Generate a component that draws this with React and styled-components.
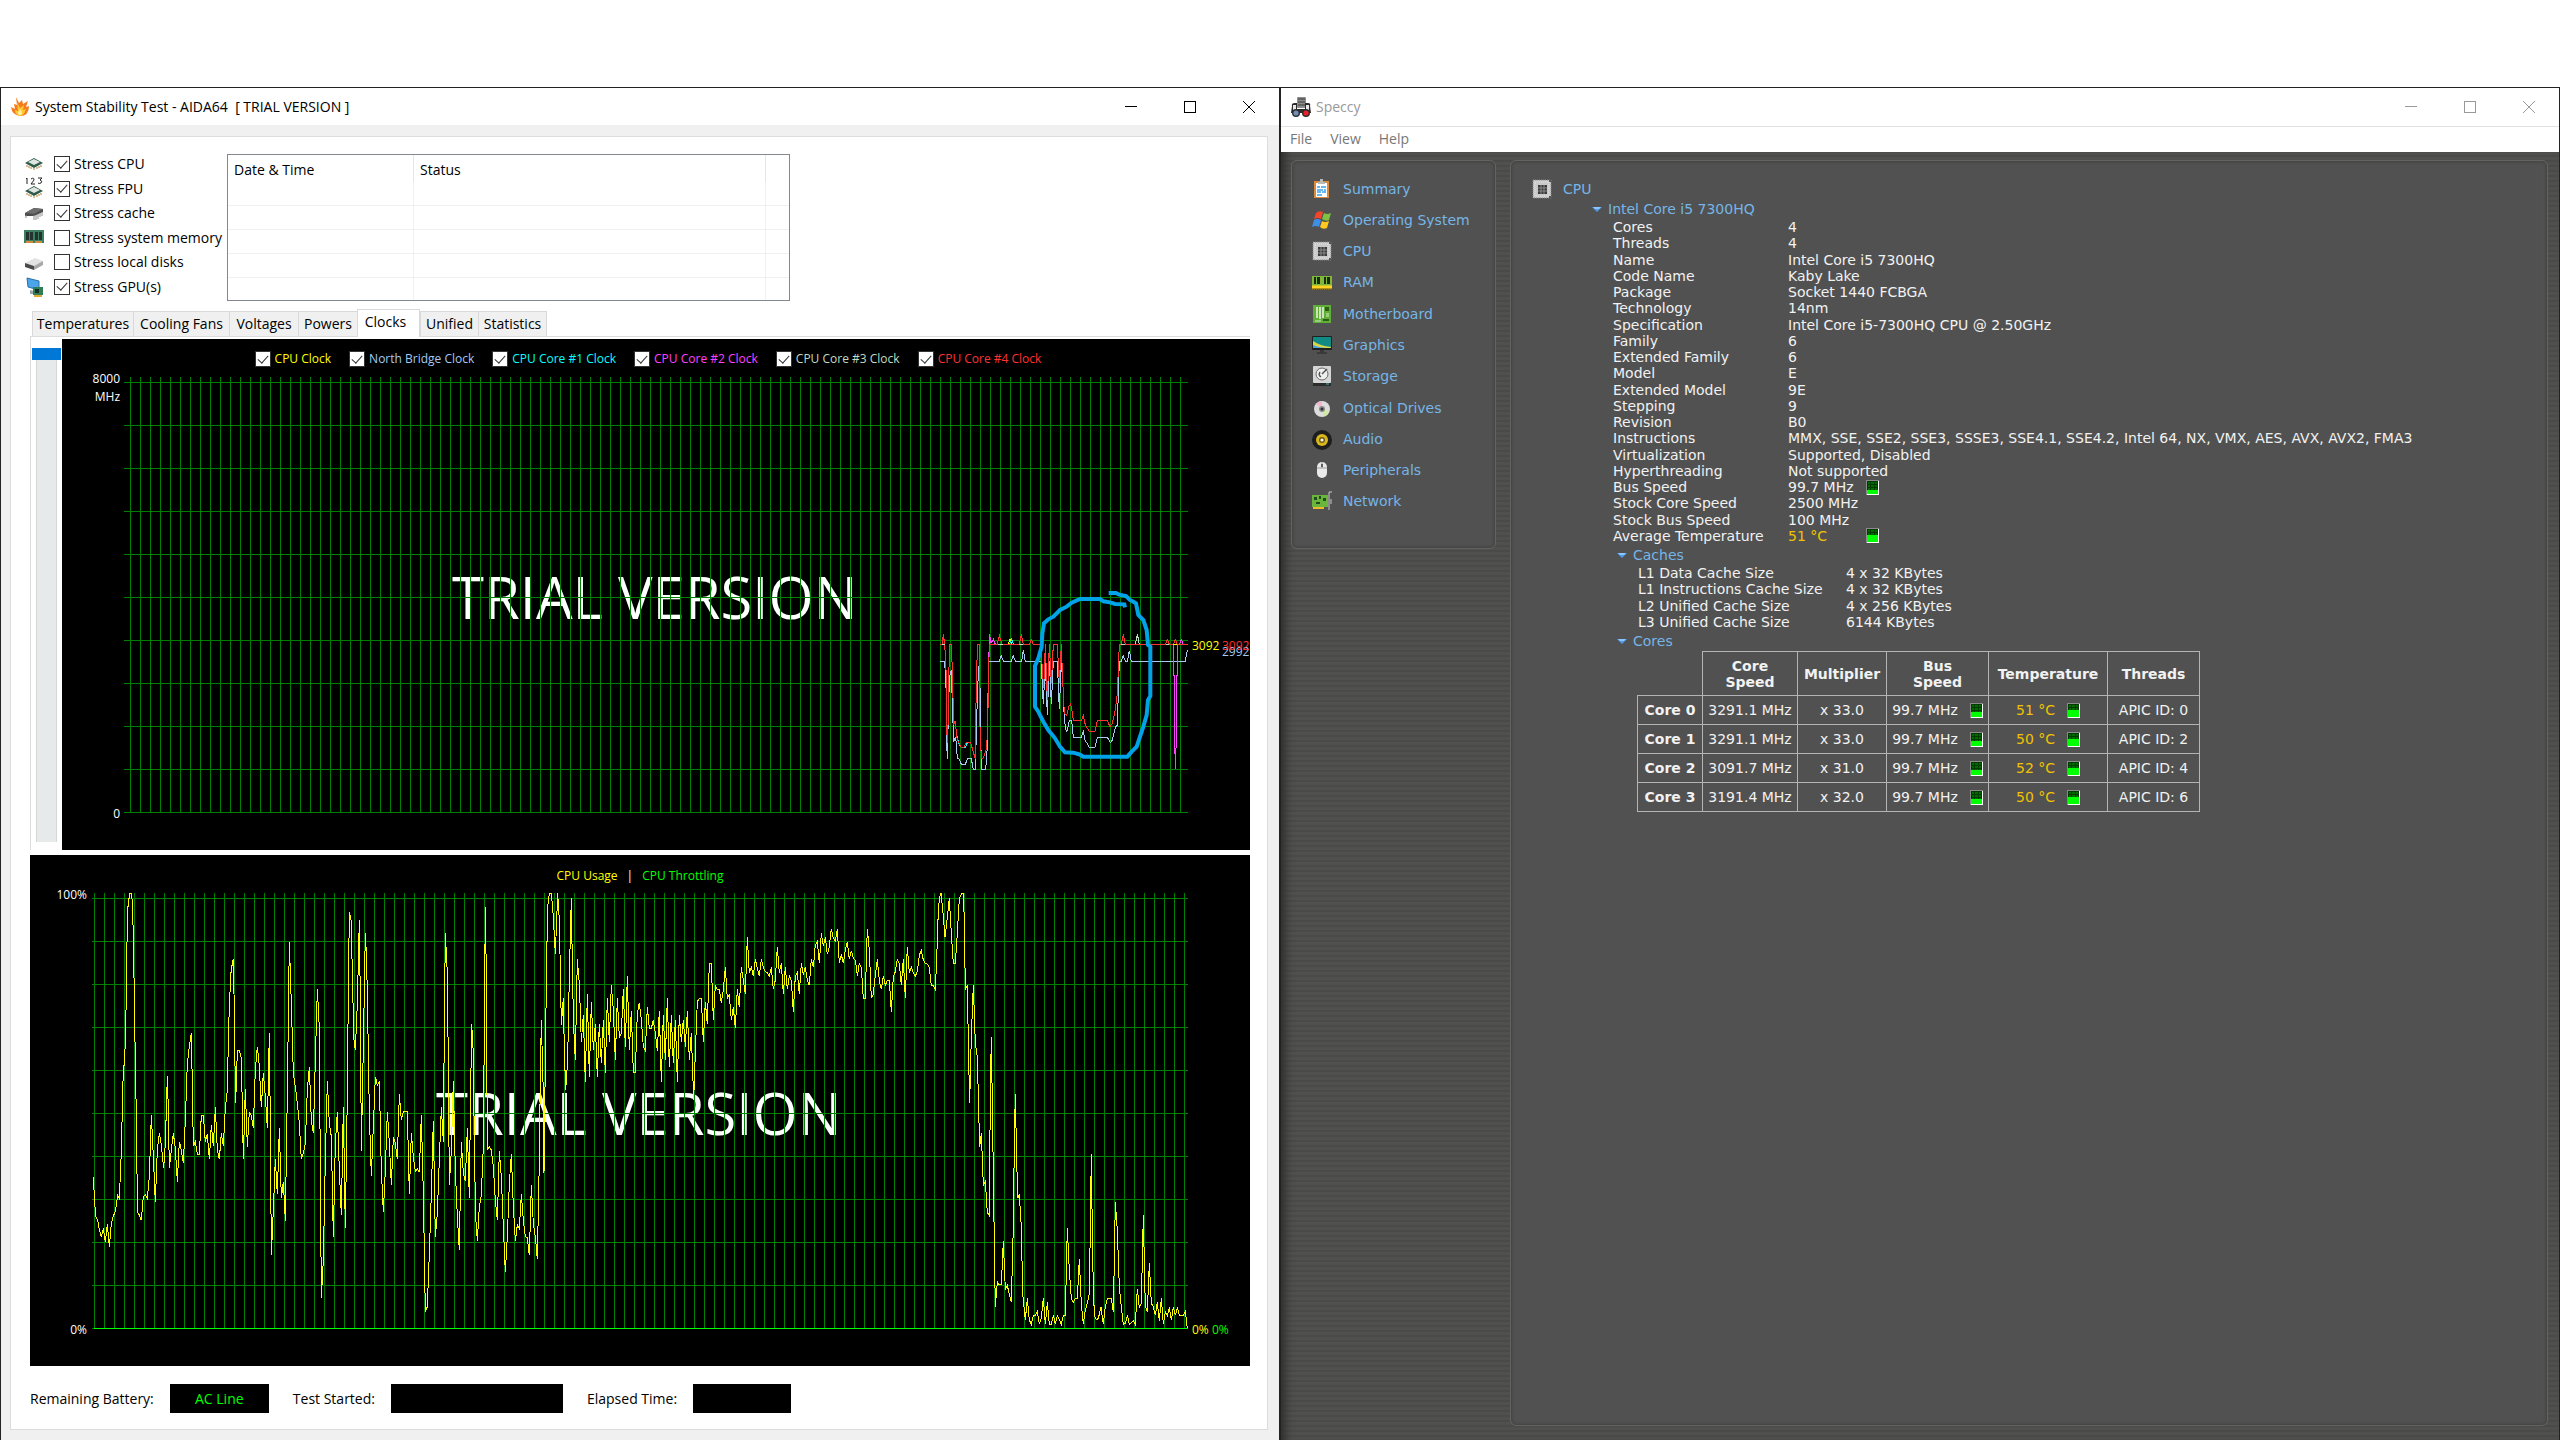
import React from 'react';
import styled, { createGlobalStyle } from 'styled-components';

const GlobalStyle = createGlobalStyle`
  * {
    box-sizing: border-box;
  }

  body {
    margin: 0;
    background: #ffffff;
  }
`;

const Desktop = styled.main`
  display: grid;
  grid-template-columns: 1fr 1fr;
  min-height: 100vh;
  padding-top: 87px;
  font-family: 'Open Sans', 'Noto Sans', sans-serif;
  font-size: 14px;
  line-height: 20px;
  color: #000000;
`;

/* ---------- window chrome ---------- */

const AppWindow = styled.section`
  display: flex;
  flex-direction: column;
  min-width: 0;
  border: 1px solid #222222;
  border-bottom: 0;
  background: ${(props) => props.$background};
`;

const TitleBar = styled.header`
  display: flex;
  align-items: center;
  height: ${(props) => (props.$inactive ? '39px' : '37px')};
  padding: 0 1px 0 10px;
  background: #ffffff;
  color: ${(props) => (props.$inactive ? '#999999' : '#000000')};
  border-bottom: ${(props) => (props.$inactive ? '1px solid #e0e0e0' : '0')};
`;

const WindowTitle = styled.h1`
  flex: 1;
  margin: 0 0 0 5px;
  font-size: 14px;
  font-weight: 400;
  white-space: pre;
`;

const WindowButton = styled.button`
  display: flex;
  align-items: center;
  justify-content: center;
  width: 59px;
  height: 36px;
  padding: 0;
  border: 0;
  background: none;
  color: inherit;
`;

const WindowButtons = () => (
  <>
    <WindowButton aria-label="Minimize">
      <svg width="12" height="12" shapeRendering="crispEdges">
        <rect y="5" width="12" height="1" fill="currentColor" />
      </svg>
    </WindowButton>
    <WindowButton aria-label="Maximize">
      <svg width="12" height="12" shapeRendering="crispEdges">
        <rect x="0.5" y="0.5" width="11" height="11" fill="none" stroke="currentColor" />
      </svg>
    </WindowButton>
    <WindowButton aria-label="Close">
      <svg width="12" height="12">
        <path d="M0 0L12 12M12 0L0 12" stroke="currentColor" />
      </svg>
    </WindowButton>
  </>
);

/* ---------- stability test ---------- */

const Panel = styled.div`
  flex: 1;
  margin: 11px 11px 10px 9px;
  padding: 17px 17px 16px 19px;
  border: 1px solid #dcdcdc;
  background: #ffffff;
`;

const Setup = styled.div`
  display: flex;
  gap: 6px;
  height: 147px;
  margin-left: -6px;
`;

const StressList = styled.div`
  display: flex;
  flex-direction: column;
  justify-content: space-between;
  width: 197px;
  padding: 2px 0 6px;
`;

const CheckLabel = styled.label`
  display: flex;
  align-items: center;
  gap: 4px;
  height: 16px;
  white-space: nowrap;
  color: ${(props) => props.$color || '#000000'};
`;

const CheckBox = styled.input`
  appearance: none;
  display: grid;
  place-content: center;
  flex: none;
  width: 16px;
  height: 16px;
  margin: 0;
  border: 1px solid #333333;
  background: #ffffff;

  &:checked::after {
    content: '';
    width: 5px;
    height: 9px;
    margin-bottom: 3px;
    border: solid #333333;
    border-width: 0 1px 1px 0;
    transform: rotate(42deg);
  }
`;

const StressIcon = styled.svg`
  flex: none;
  width: 20px;
  height: 20px;
  margin-right: 6px;
`;

const LogTable = styled.table`
  width: 563px;
  border: 1px solid #828790;
  border-collapse: separate;
  border-spacing: 0;
  table-layout: fixed;
`;

const LogHead = styled.th`
  width: ${(props) => props.$width};
  height: 27px;
  padding: 3px 0 0 6px;
  border-right: ${(props) => (props.$last ? '0' : '1px solid #e5e5e5')};
  font-weight: 400;
  text-align: left;
`;

const LogCell = styled.td`
  height: ${(props) => (props.$last ? '22px' : '24px')};
  padding: 0;
  border-right: ${(props) => (props.$edge ? '0' : '1px solid #f0f0f0')};
  border-bottom: ${(props) => (props.$last ? '0' : '1px solid #f0f0f0')};
`;

const TabList = styled.div`
  display: flex;
  align-items: flex-end;
  height: 27px;
  margin-top: 8px;
  padding-left: 2px;
`;

const Tab = styled.button`
  height: ${(props) => (props.$active ? '28px' : '25px')};
  width: ${(props) => props.$width};
  margin-bottom: ${(props) => (props.$active ? '-1px' : '0')};
  padding: ${(props) => (props.$active ? '0 6px 3px 0' : '0')};
  border: 1px solid #d9d9d9;
  border-bottom: 0;
  border-right-width: ${(props) => (props.$joined ? '0' : '1px')};
  background: ${(props) => (props.$active ? '#ffffff' : '#f0f0f0')};
  font: inherit;
  white-space: nowrap;
  color: #000000;
`;

const TabBody = styled.div`
  display: grid;
  grid-template-columns: 31px 1fr;
  padding-top: 2px;
  border: solid #dcdcdc;
  border-width: 1px 0 0 1px;
`;

/* the slider takes its length from the graph beside it */
const RangeColumn = styled.div`
  contain: size;
  padding: 9px 1px 8px;
`;

const RangeSlider = styled.input`
  appearance: none;
  writing-mode: vertical-lr;
  display: block;
  width: 29px;
  height: 100%;
  margin: 0;
  background:
    linear-gradient(#e7eaea, #e7eaea) center / 19px 100% no-repeat,
    linear-gradient(#d6d6d6, #d6d6d6) center / 21px 100% no-repeat;

  &::-webkit-slider-thumb {
    appearance: none;
    width: 29px;
    height: 12px;
    background: #0078d7;
  }
`;

const Graph = styled.div`
  min-width: 0;
  margin-top: ${(props) => props.$gap || '0'};
  background: #000000;
  font-size: 12px;
  line-height: 16px;
`;

const GraphLegend = styled.div`
  display: flex;
  justify-content: center;
  gap: ${(props) => props.$gap};
  height: ${(props) => props.$height};
  padding: ${(props) => props.$padding};
  white-space: pre;
`;

const LegendText = styled.span`
  color: ${(props) => props.$color};
`;

const Plot = styled.svg`
  display: block;
  width: 100%;
  height: auto;
  overflow: visible;
  font-family: 'Open Sans', 'Noto Sans', sans-serif;
  font-size: 12px;

  polyline,
  path {
    fill: none;
    vector-effect: non-scaling-stroke;
  }
`;

const Watermark = styled.text`
  font-size: 58px;
  fill: #ffffff;
`;

const StatusBar = styled.div`
  display: flex;
  align-items: center;
  gap: 24px;
  margin-top: 18px;
`;

const StatusField = styled.label`
  display: flex;
  align-items: center;
  gap: 16px;
`;

const StatusValue = styled.output`
  width: ${(props) => props.$width};
  height: 29px;
  background: #000000;
  color: #00ff00;
  line-height: 29px;
  text-align: center;
`;

const stressItems = [
  { name: 'Stress CPU', icon: 'chip', checked: true },
  { name: 'Stress FPU', icon: 'fpu', checked: true },
  { name: 'Stress cache', icon: 'cache', checked: true },
  { name: 'Stress system memory', icon: 'memory', checked: false },
  { name: 'Stress local disks', icon: 'disk', checked: false },
  { name: 'Stress GPU(s)', icon: 'gpu', checked: true },
];

const tabs = [
  { name: 'Temperatures', width: '101px', joined: true },
  { name: 'Cooling Fans', width: '96px', joined: true },
  { name: 'Voltages', width: '69px', joined: true },
  { name: 'Powers', width: '59px', joined: true },
  { name: 'Clocks', width: '63px', active: true },
  { name: 'Unified', width: '58px', joined: true },
  { name: 'Statistics', width: '69px' },
];

const clocks = [
  { name: 'CPU Clock', color: '#ffff00' },
  { name: 'North Bridge Clock', color: '#a6caf0' },
  { name: 'CPU Core #1 Clock', color: '#00ffff' },
  { name: 'CPU Core #2 Clock', color: '#ff40ff' },
  { name: 'CPU Core #3 Clock', color: '#c0dcc0' },
  { name: 'CPU Core #4 Clock', color: '#ff3030' },
];

// traces are recorded at three units per chart pixel
const clockTraces = [
  {
    color: '#a6caf0',
    points:
      '180,304 194,304 198,375 199,520 202,596 206,420 209,350 214,330 217,430 221,545 227,530 232,595 238,597 244,613 256,613 262,597 274,597 280,628 286,628 289,520 293,380 298,304 300,380 304,628 317,628 322,560 326,304 358,304 364,287 370,304 394,304 400,287 406,304 425,304 430,270 436,304 484,304 487,380 490,433 496,310 502,466 508,304 514,433 520,304 532,304 538,448 544,304 549,380 553,480 559,514 562,512 568,482 575,482 580,532 604,532 610,514 616,545 620,547 628,562 645,562 652,532 682,532 691,548 697,540 706,502 712,495 718,304 724,304 730,287 736,304 742,304 748,272 754,304 916,304 922,270',
  },
  { color: '#00ffff', points: '229,518 236,550 244,562 256,562 262,548' },
  { color: '#ff40ff', points: '322,500 326,305 329,223 333,250 340,238 346,253' },
  {
    color: '#ff3030',
    points:
      '180,253 186,253 190,223 194,253 198,320 199,470 202,550 205,470 208,253 214,253 217,330 221,495 226,482 230,530 236,548 244,562 252,562 258,548 272,547 278,570 286,597 289,350 293,253 298,253 300,500 304,597 310,594 318,570 323,520 326,310 329,253 352,253 358,226 366,253 418,253 424,223 430,253 448,253 454,239 460,253 483,253 487,330 491,385 496,253 502,420 508,253 514,370 520,253 532,253 538,370 544,253 548,360 553,460 560,467 566,440 571,433 575,445 580,482 604,482 610,467 616,495 628,514 645,514 652,482 682,482 690,500 697,490 706,450 712,400 718,253 724,253 730,223 736,253 857,253 862,239 868,253 880,253 886,239 892,253 924,253',
  },
  { color: '#ffff00', points: '384,253 390,238 396,253' },
  { color: '#00ffff', points: '388,253 395,238 401,253' },
  { color: '#ff40ff', points: '881,253 881,348 884,348 884,533 886,628 889,533 889,348 892,348 892,253' },
  { color: '#ff40ff', points: '898,253 904,239 910,253' },
  { color: '#c0dcc0', points: '766,253 772,222 778,253' },
  { color: '#c0dcc0', points: '186,253 195,253' },
  { color: '#c0dcc0', points: '354,253 370,253' },
  { color: '#c0dcc0', points: '418,253 430,253' },
  { color: '#c0dcc0', points: '724,253 736,253' },
  { color: '#c0dcc0', points: '857,253 868,253' },
  { color: '#ffff00', points: '880,253 892,253' },
];

const markerPath =
  'M686 99H708L718 104L738 108L750 120L768 130L775 165L790 180L800 210L804 255L811 260V408L804 420L800 465L790 500L780 530L770 560L755 575L742 590H610L600 584L580 578L555 577L540 560L525 535L505 510L490 485L475 455L465 440V318L475 295L485 260L487 220L492 190L505 178L520 170L540 150L560 140L575 128L600 117H660L670 124L690 127L705 132L733 133L735 142';

const usageTraces = [
  {
    x: 0,
    points:
      '190,950 193,1010 197,1070 203,1080 208,1108 214,1132 220,1105 226,1145 232,1093 238,1160 244,1090 250,1068 256,1055 263,1005 268,1015 273,900 276,790 279,665 285,570 288,455 291,250 294,140 299,100 305,100 308,150 311,280 314,490 318,710 321,940 323,1057 329,1067 334,1081 340,1010 346,1005 352,1015 358,950 364,766 370,890 376,1027 382,870 388,820 394,855 401,925 406,850 409,750 412,648 415,750 418,925 424,870 430,820 436,865 442,965 448,845 454,870 460,910 466,780 472,610 478,560 484,520 487,680 490,858 496,845 502,883 508,883 514,766 520,766 526,845 532,822 538,898 544,795 550,858 556,742 562,870 568,898 574,820 580,858 586,745 592,690 596,500 602,345 608,303 611,298 613,500 617,728 620,640 622,571 628,571 634,595 640,898 646,688 652,860 658,755 664,768 670,805 676,630 682,560 688,620 694,742 700,638 706,710 712,805 718,520 721,800 724,1186 730,1050 736,898 742,1003 748,805 754,1015 760,965 766,1082 772,700 778,245 784,430 790,640 796,680 802,730 808,790 814,898 820,880 826,850 832,690 838,622 844,780 850,820 856,600 862,388 867,480 870,800 874,1315 880,1200 886,900 892,663 898,790 904,830 910,1132 916,850 922,755 928,930 934,1066 940,742 946,1105 952,700 955,400 958,155 964,185 967,350 972,540 976,570 982,430 988,181 991,430 994,872 1000,560 1006,220 1010,300 1014,520 1018,760 1024,948 1030,800 1036,650 1042,675 1048,663 1054,930 1060,1055 1066,930 1072,755 1078,850 1084,975 1090,832 1096,850 1102,898 1108,703 1114,780 1120,755 1132,755 1138,1003 1144,820 1150,890 1156,935 1162,925 1168,937 1174,766 1180,1000 1186,1355 1192,1340 1198,1180 1204,1000 1210,782 1216,1132 1222,1060 1228,900 1234,742 1240,845 1243,500 1246,220 1252,340 1255,620 1258,975 1264,870 1270,663 1276,930 1282,1070 1288,1170 1291,1000 1294,845 1300,940 1306,963 1312,805 1318,1015 1321,760 1325,492 1330,580 1333,860 1337,1070 1342,1143 1348,1040 1354,1005 1360,860 1363,500 1366,142 1369,350 1371,700 1373,870 1378,860 1384,870 1390,920 1396,1020 1402,1080 1405,980 1408,872 1414,950 1420,1100 1426,1237 1432,1130 1438,970 1444,883 1450,1040 1456,1143 1462,1095 1468,1105 1474,1003 1480,1080 1486,1130 1492,1132 1498,1186 1504,975 1510,1090 1516,1130 1522,1198 1528,900 1531,650 1534,480 1540,700 1542,938 1546,600 1550,300 1553,140 1558,100',
  },
  {
    x: 1530,
    points:
      '28,100 34,100 40,170 46,283 50,180 53,100 58,180 61,330 64,495 70,415 73,570 77,690 83,600 88,350 94,115 98,380 102,520 106,600 112,298 118,370 124,545 130,465 136,665 142,402 148,650 154,426 160,570 166,492 172,650 178,492 184,610 190,480 196,638 202,415 208,545 214,376 220,450 226,600 232,415 238,532 244,520 250,388 256,560 262,348 268,570 274,453 280,638 286,638 292,460 298,428 304,480 310,560 316,572 322,442 328,505 334,505 340,480 346,520 352,572 358,453 364,665 370,465 376,600 382,415 388,622 394,465 400,610 406,480 412,665 418,465 424,545 430,480 436,560 442,453 448,600 454,520 461,720 466,580 472,425 478,415 484,415 490,545 496,426 502,492 508,310 514,310 520,480 526,376 532,388 538,388 544,428 550,390 556,322 562,415 568,405 574,480 580,442 586,505 592,388 598,442 604,322 610,360 616,402 622,232 628,340 634,322 640,348 646,298 652,325 658,348 664,298 670,322 676,335 682,338 688,348 694,322 700,388 706,360 712,260 718,338 724,310 730,402 736,322 742,388 748,348 754,362 760,455 766,348 772,338 778,402 784,310 790,345 796,322 802,360 808,376 814,298 820,322 826,255 832,245 838,310 844,220 850,258 856,232 862,283 868,260 874,206 880,235 886,243 892,206 898,310 904,283 910,310 916,270 922,245 928,298 934,272 940,295 946,300 952,348 958,310 964,322 970,415 976,415 979,300 982,206 988,270 994,415 1000,402 1006,345 1012,298 1018,362 1024,388 1030,348 1036,375 1042,362 1048,362 1054,455 1060,350 1066,335 1072,298 1078,310 1084,376 1090,298 1096,415 1102,260 1108,338 1114,322 1120,338 1126,348 1132,335 1138,285 1144,272 1150,300 1156,310 1162,312 1168,322 1174,376 1180,376 1186,388 1190,300 1194,180 1198,115 1203,100 1208,145 1215,232 1220,190 1228,115 1234,220 1240,310 1246,310 1252,220 1258,115 1265,100 1271,100',
  },
  {
    x: 2610,
    points:
      '190,100 193,180 196,388 202,378 206,600 209,728 214,530 220,376 226,550 232,592 236,750 239,860 244,820 250,975 256,965 262,1057 268,1066 271,700 274,532 278,800 283,1150 286,1342 292,1265 298,1275 304,1275 310,1143 316,1287 322,1277 334,1327 340,1100 343,850 346,703 349,850 353,1015 358,1005 364,1100 368,1300 376,1380 382,1315 388,1380 394,1393 400,1366 406,1366 412,1355 418,1393 424,1375 430,1315 436,1393 442,1327 448,1393 454,1393 460,1366 466,1393 472,1366 484,1393 490,1366 496,1366 502,1105 508,1230 514,1315 520,1327 526,1315 532,1315 538,1198 544,1330 550,1393 556,1350 562,1330 568,1300 571,1100 574,883 578,1200 583,1366 589,1380 595,1375 603,1342 610,1393 616,1340 622,1315 634,1315 640,1355 643,1200 646,1027 652,1110 658,1280 664,1340 670,1393 676,1390 682,1366 688,1393 700,1382 706,1393 712,1287 718,1342 724,1330 730,1066 736,1340 742,1355 748,1210 754,1330 760,1340 766,1366 772,1327 778,1382 784,1315 790,1393 796,1355 802,1366 808,1342 814,1380 820,1342 826,1366 832,1342 838,1366 850,1366 856,1355 862,1405',
  },
];

const GridLines = ({ left, first, last, top, right }) => {
  const columns = [];
  for (let x = first; x <= last; x += 10) columns.push(x);
  return (
    <g fill="#008000" shapeRendering="crispEdges">
      {columns.map((x) => (
        <rect key={x} x={x} y={top - 5} width="1" height="435" />
      ))}
      {Array.from({ length: 11 }, (_, i) => (
        <rect key={i} x={left} y={top + i * 43} width={right - left} height="1" />
      ))}
    </g>
  );
};

const ClockPlot = () => (
  <Plot viewBox="0 30 1188 481" role="img" aria-label="Clocks">
    <Watermark x="390" y="280">TRIAL VERSION</Watermark>
    <GridLines left={62} first={68} last={1118} top={43} right={1126} />
    <g fill="#ffffff" textAnchor="end">
      <text x="58" y="44">8000</text>
      <text x="58" y="62">MHz</text>
      <text x="58" y="479">0</text>
    </g>
    <g transform="translate(818 221) scale(0.33333)">
      {clockTraces.map((trace, i) => (
        <polyline key={i} points={trace.points} stroke={trace.color} shapeRendering="crispEdges" />
      ))}
      <path d={markerPath} stroke="#00a2e8" strokeWidth="4" />
    </g>
    <text x="1130" y="311" fill="#ffff00">3092</text>
    <text x="1160" y="317" fill="#a6caf0">2992</text>
    <text x="1160" y="311" fill="#ff3030">3092</text>
  </Plot>
);

const UsagePlot = () => (
  <Plot viewBox="0 38 1220 473" role="img" aria-label="CPU usage">
    <Watermark x="406" y="280">TRIAL VERSION</Watermark>
    <GridLines left={62} first={64} last={1154} top={43} right={1158} />
    <rect x="64" y="473" width="1094" height="1" fill="#00ff00" />
    <g fill="#ffffff" textAnchor="end">
      <text x="57" y="44">100%</text>
      <text x="57" y="479">0%</text>
    </g>
    <g transform="translate(0 5) scale(0.33333)" stroke="#ffff00" shapeRendering="crispEdges">
      {usageTraces.map((trace) => (
        <polyline key={trace.x} points={trace.points} transform={`translate(${trace.x} 0)`} />
      ))}
    </g>
    <text x="1162" y="479" fill="#ffff00">0%</text>
    <text x="1182" y="479" fill="#00ff00">0%</text>
  </Plot>
);

const Chip = () => (
  <>
    <path d="M1 9L10 4L19 9L10 14Z" fill="#2f5b4a" />
    <path d="M4 8L10 5L16 8L10 11Z" fill="#dfe6e2" />
    <path d="M3 11v2M5 12v2M7 13v2M10 14v2M13 13v2M15 12v2M17 11v2" stroke="#b07a2c" />
  </>
);

const stressDrawings = {
  chip: <Chip />,
  fpu: (
    <>
      <g transform="translate(0 3)">
        <Chip />
      </g>
      <path
        d="M2 0l1-1v6M7 0q3-2 3 1l-3 4h4M14-1h4l-2 2q3 1 1 3q-2 1-3 0"
        fill="none"
        stroke="#222222"
      />
    </>
  ),
  cache: (
    <>
      <path d="M1 10L10 5L19 6L19 9L10 13L1 13Z" fill="#4c4c4c" />
      <path d="M1 10L10 5L19 6L10 11Z" fill="#6d6d6d" />
      <path d="M2 12v3M10 12v5M12 12v5M14 11v5M16 10v4M18 9v4" stroke="#8c8c8c" />
    </>
  ),
  memory: (
    <>
      <rect x="0" y="2" width="20" height="13" fill="#3c7f63" />
      <path d="M2 4h3v8h-3zM6 4h3v8h-3zM11 4h3v8h-3zM15 4h3v8h-3z" fill="#23322c" />
      <path d="M2 14h7M11 14h7" stroke="#d08b3c" strokeWidth="2" />
    </>
  ),
  disk: (
    <>
      <path d="M1 11L11 6L19 9L10 14Z" fill="#e3e3e3" />
      <path d="M1 11L10 14V18L1 15Z" fill="#4a4a4a" />
      <path d="M10 14L19 9V13L10 18Z" fill="#a8a8a8" />
    </>
  ),
  gpu: (
    <>
      <path d="M3 1L15 4V13L4 10Z" fill="#4aa5ea" stroke="#2b6ea8" />
      <path d="M6 13l4 1v3H6z" fill="#9aa4ac" />
      <rect x="9" y="10" width="10" height="8" fill="#2e7d55" />
      <rect x="11" y="12" width="4" height="4" fill="#12301f" />
      <path d="M10 19h8" stroke="#e0a63a" strokeWidth="2" />
    </>
  ),
};

const StabilityTest = () => (
  <AppWindow $background="#f0f0f0">
    <TitleBar>
      <svg width="19" height="20" viewBox="0 0 19 20">
        <path
          d="M5 0L8 6L11 3L12 7L17 4L15 10L18 9Q18 19 9 19Q1 18 0 10L4 12L3 7L6 8Z"
          fill="#f57c1c"
        />
        <path d="M6 5L9 11L13 8L12 13L15 12Q13 19 9 19Q4 18 4 13L7 14Z" fill="#ffc534" />
        <path d="M9 12L11 15Q11 18 9 18Q7 18 7 16Z" fill="#fff3a0" />
      </svg>
      <WindowTitle>{'System Stability Test - AIDA64  [ TRIAL VERSION ]'}</WindowTitle>
      <WindowButtons />
    </TitleBar>
    <Panel>
      <Setup>
        <StressList>
          {stressItems.map((item) => (
            <CheckLabel key={item.name}>
              <StressIcon viewBox="0 0 20 20" overflow="visible">
                {stressDrawings[item.icon]}
              </StressIcon>
              <CheckBox type="checkbox" defaultChecked={item.checked} />
              {item.name}
            </CheckLabel>
          ))}
        </StressList>
        <LogTable>
          <thead>
            <tr>
              <LogHead $width="186px">Date &amp; Time</LogHead>
              <LogHead $width="352px">Status</LogHead>
              <LogHead $last as="td" />
            </tr>
          </thead>
          <tbody>
            {[0, 1, 2, 3, 4].map((row) => (
              <tr key={row}>
                <LogCell $last={row === 4} />
                <LogCell $last={row === 4} />
                <LogCell $last={row === 4} $edge />
              </tr>
            ))}
          </tbody>
        </LogTable>
      </Setup>
      <TabList role="tablist">
        {tabs.map((tab) => (
          <Tab
            key={tab.name}
            role="tab"
            aria-selected={!!tab.active}
            $active={tab.active}
            $joined={tab.joined}
            $width={tab.width}
          >
            {tab.name}
          </Tab>
        ))}
      </TabList>
      <TabBody>
        <RangeColumn>
          <RangeSlider type="range" aria-label="Scale" defaultValue="0" />
        </RangeColumn>
        <Graph>
          <GraphLegend $gap="18px" $height="30px" $padding="12px 16px 0 0">
            {clocks.map((clock) => (
              <CheckLabel key={clock.name} $color={clock.color}>
                <CheckBox type="checkbox" defaultChecked />
                {clock.name}
              </CheckLabel>
            ))}
          </GraphLegend>
          <ClockPlot />
        </Graph>
      </TabBody>
      <Graph $gap="5px">
        <GraphLegend $gap="9px" $height="38px" $padding="13px 0 0">
          <LegendText $color="#ffff00">CPU Usage</LegendText>
          <LegendText $color="#ffffff">|</LegendText>
          <LegendText $color="#00ff00">CPU Throttling</LegendText>
        </GraphLegend>
        <UsagePlot />
      </Graph>
      <StatusBar>
        <StatusField>
          Remaining Battery:
          <StatusValue $width="99px">AC Line</StatusValue>
        </StatusField>
        <StatusField>
          Test Started:
          <StatusValue $width="172px" />
        </StatusField>
        <StatusField>
          Elapsed Time:
          <StatusValue $width="98px" />
        </StatusField>
      </StatusBar>
    </Panel>
  </AppWindow>
);

/* ---------- speccy ---------- */

const MenuBar = styled.nav`
  display: flex;
  gap: 18px;
  height: 25px;
  padding: 0 0 2px 9px;
  background: #ffffff;
`;

const MenuItem = styled.button`
  padding: 0;
  border: 0;
  background: none;
  font: inherit;
  color: #777777;
`;

const SpeccyBody = styled.div`
  flex: 1;
  display: grid;
  grid-template-columns: 205px 1fr;
  align-items: start;
  gap: 14px;
  padding: 8px 11px 14px 10px;
  background: repeating-linear-gradient(#50504e 0 3px, #4a4a48 3px 5px);
  box-shadow: inset 10px 0 10px -6px #2c2c2c;
  font-family: 'DejaVu Sans', Verdana, sans-serif;
  font-size: 14px;
  line-height: 16px;
  color: #f2f2f2;
`;

const Card = styled.div`
  border: 1px solid #636361;
  border-radius: 6px;
  background: #515151;
  box-shadow: inset 0 0 3px 1px #424240;
`;

const SideMenu = styled(Card).attrs({ as: 'nav' })`
  display: grid;
  grid-auto-rows: 1fr;
  height: 389px;
  padding: 12px 0 31px 20px;
`;

const SideLink = styled.a`
  display: flex;
  align-items: center;
  gap: 11px;
  color: #76b5e6;
  text-decoration: none;
`;

const Details = styled(Card)`
  align-self: stretch;
  padding: 18px 21px;
`;

const SectionTitle = styled.h2`
  display: flex;
  align-items: center;
  gap: 11px;
  height: 20px;
  margin: 0;
  font-size: 14px;
  font-weight: 400;
  color: #76b5e6;
`;

const GroupTitle = styled.h3`
  display: flex;
  align-items: center;
  gap: 6px;
  height: 20px;
  margin: 0 0 0 ${(props) => props.$indent};
  font-size: 14px;
  font-weight: 400;
  color: #76b5e6;
`;

const Properties = styled.dl`
  display: grid;
  grid-template-columns: ${(props) => props.$keyWidth} 1fr;
  grid-auto-rows: 1fr;
  height: ${(props) => props.$height};
  margin: 0 0 1px ${(props) => props.$indent};

  dt,
  dd {
    margin: 0;
    white-space: nowrap;
  }
`;

const Reading = styled.dd`
  display: flex;
  align-items: center;
  color: ${(props) => (props.$warm ? '#f2c200' : 'inherit')};
`;

const ReadingText = styled.span`
  width: ${(props) => (props.$wide ? '78px' : 'auto')};
`;

const MeterSvg = styled.svg`
  flex: none;
  width: 13px;
  height: 15px;
`;

const CoreTable = styled.table`
  margin-left: 105px;
  border-collapse: collapse;
  table-layout: fixed;
  width: 562px;
`;

const CoreHead = styled.th`
  width: ${(props) => props.$width};
  height: ${(props) => (props.scope === 'row' ? '29px' : '44px')};
  padding: 0;
  border: 1px solid #b4b4b4;
  font-weight: 700;
  text-align: center;
  white-space: nowrap;
`;

const CoreCell = styled.td`
  width: ${(props) => props.$width};
  padding: 0;
  border: ${(props) => (props.$empty ? '0' : '1px solid #b4b4b4')};
  text-align: center;
  white-space: nowrap;
  color: ${(props) => (props.$warm ? '#f2c200' : 'inherit')};
`;

const CellReading = styled.div`
  display: flex;
  align-items: center;
  justify-content: center;
  gap: 12px;
`;

const Meter = ({ level }) => (
  <MeterSvg viewBox="0 0 13 15" shapeRendering="crispEdges">
    <rect width="13" height="15" fill="#ffffff" />
    <path d="M0 0H13L12 1H1V15H0Z" fill="#8a8a8a" />
    <rect x="1" y="1" width="11" height="13" fill="#003c00" />
    <path d="M2 2h2v2h-2zM5 2h3v2h-3zM9 2h2v2h-2zM2 5h2v2h-2zM5 5h3v2h-3zM9 5h2v2h-2zM2 8h2v2h-2zM5 8h3v2h-3zM9 8h2v2h-2z" fill="#006c00" />
    <rect x="1" y={14 - level} width="11" height={level} fill="#00ff00" />
  </MeterSvg>
);

const Arrow = () => (
  <svg width="10" height="6" viewBox="0 0 10 6">
    <path d="M0 1H10L5 6Z" fill="#4c9bf0" />
    <path d="M1 1H9L7 3H3Z" fill="#8cc6ff" />
  </svg>
);

const CpuDrawing = () => (
  <>
    <rect x="1" y="1" width="18" height="18" fill="#c9c9c9" />
    <rect x="1" y="1" width="18" height="18" fill="none" stroke="#8b8b8b" strokeDasharray="1 1" />
    <rect x="3" y="3" width="14" height="14" fill="none" stroke="#e6e6e6" strokeDasharray="1 1" />
    <rect x="6" y="6" width="9" height="9" fill="#3b3b3b" />
    <path d="M6 9h9M6 12h9M9 6v9M12 6v9" stroke="#8a8a8a" />
    <path d="M18 1v2M18 17v2" stroke="#555555" strokeWidth="2" />
  </>
);

const sideItems = [
  {
    name: 'Summary',
    icon: (
      <>
        <rect x="2" y="2" width="15" height="17" fill="#d98a3c" />
        <rect x="4" y="4" width="11" height="14" fill="#ffffff" />
        <path d="M6 3h7v2H6zM8 0h3v3H8z" fill="#b9b9b9" />
        <path d="M5 8h3M9 8h5M5 11h6M12 11h2M5 13h4M10 13h4M5 16h5" stroke="#38a0e8" strokeWidth="1.4" />
      </>
    ),
  },
  {
    name: 'Operating System',
    icon: (
      <>
        <path d="M4 3Q7 0 11 2L9 9Q6 7 2 9Z" fill="#f2452b" />
        <path d="M12 3Q15 5 19 3L17 10Q14 12 10 9Z" fill="#7fc241" />
        <path d="M2 10Q5 8 9 10L7 17Q4 15 0 17Z" fill="#3f8ee8" />
        <path d="M10 11Q13 13 17 11L15 18Q11 20 8 17Z" fill="#ffc91f" />
      </>
    ),
  },
  { name: 'CPU', icon: <CpuDrawing /> },
  {
    name: 'RAM',
    icon: (
      <>
        <rect x="0" y="4" width="20" height="12" fill="#7db83c" />
        <path d="M2 5h2v7h-2zM5 5h3v7h-3zM12 5h2v7h-2zM15 5h3v7h-3z" fill="#1c2a12" />
        <path d="M0 15h20" stroke="#ffd21f" strokeWidth="3" />
        <path d="M0 17h20" stroke="#b98d00" strokeDasharray="1 1" />
      </>
    ),
  },
  {
    name: 'Motherboard',
    icon: (
      <>
        <rect x="1" y="1" width="18" height="18" fill="#5fae35" />
        <path d="M5 3v11M8 3v12M11 3v11" stroke="#e6f2dc" strokeWidth="1.6" />
        <rect x="13" y="3" width="4" height="4" fill="#2e5c1a" />
        <path d="M14 10h3M14 12h3M3 17h6" stroke="#d5ecc5" />
        <path d="M11 16h6" stroke="#2e5c1a" strokeWidth="2" />
      </>
    ),
  },
  {
    name: 'Graphics',
    icon: (
      <>
        <rect x="0" y="1" width="20" height="14" rx="1" fill="#1f1f1f" />
        <rect x="1" y="2" width="18" height="11" fill="#128a84" />
        <path d="M1 6Q8 11 19 12V13H1Z" fill="#d8d94a" />
        <path d="M1 10Q8 13 14 13H1Z" fill="#4aa4e0" />
        <path d="M8 15h4v2H8zM5 17h10v2H5z" fill="#3a3a3a" />
      </>
    ),
  },
  {
    name: 'Storage',
    icon: (
      <>
        <rect x="1" y="0" width="18" height="17" rx="1" fill="#d5d5d5" />
        <circle cx="10" cy="8" r="6" fill="#efefef" stroke="#6a6a6a" />
        <path d="M10 8L15 3M8 6Q6 9 9 11" stroke="#555555" strokeWidth="1.5" fill="none" />
        <rect x="1" y="17" width="18" height="3" fill="#2c2c2c" />
        <path d="M14 18h3" stroke="#2fc1c9" />
      </>
    ),
  },
  {
    name: 'Optical Drives',
    icon: (
      <>
        <circle cx="10" cy="11" r="8" fill="#dcdcdc" />
        <path d="M10 11L4 6Q7 3 10 3Z" fill="#f4b6cf" />
        <path d="M10 11L17 14Q15 18 12 18Z" fill="#cdeaa0" />
        <circle cx="10" cy="11" r="3" fill="#8c8c8c" />
        <circle cx="10" cy="11" r="1.5" fill="#333333" />
      </>
    ),
  },
  {
    name: 'Audio',
    icon: (
      <>
        <circle cx="10" cy="11" r="10" fill="#1e1e1e" />
        <circle cx="10" cy="11" r="6" fill="#d8b81c" />
        <circle cx="10" cy="11" r="3" fill="#6b5a12" />
        <circle cx="10" cy="11" r="1.6" fill="#f4f4f4" />
      </>
    ),
  },
  {
    name: 'Peripherals',
    icon: (
      <>
        <rect x="5" y="2" width="10" height="16" rx="5" fill="#e9e9e9" />
        <path d="M5 8h10M10 2v6" stroke="#9b9b9b" fill="none" />
        <rect x="9" y="4" width="2" height="3" fill="#5d5d5d" />
      </>
    ),
  },
  {
    name: 'Network',
    icon: (
      <>
        <rect x="0" y="4" width="16" height="12" fill="#6ab63c" />
        <path d="M2 6h3v3h-3zM7 5h2v3h-2zM11 7h3v3h-3zM4 11h4v2h-4z" fill="#24491a" />
        <path d="M1 17h11" stroke="#f0b92c" strokeWidth="2" />
        <path d="M20 1h-3v18M19 8v5" stroke="#c9c9c9" fill="none" />
      </>
    ),
  },
];

const cpuProperties = [
  ['Cores', '4'],
  ['Threads', '4'],
  ['Name', 'Intel Core i5 7300HQ'],
  ['Code Name', 'Kaby Lake'],
  ['Package', 'Socket 1440 FCBGA'],
  ['Technology', '14nm'],
  ['Specification', 'Intel Core i5-7300HQ CPU @ 2.50GHz'],
  ['Family', '6'],
  ['Extended Family', '6'],
  ['Model', 'E'],
  ['Extended Model', '9E'],
  ['Stepping', '9'],
  ['Revision', 'B0'],
  ['Instructions', 'MMX, SSE, SSE2, SSE3, SSSE3, SSE4.1, SSE4.2, Intel 64, NX, VMX, AES, AVX, AVX2, FMA3'],
  ['Virtualization', 'Supported, Disabled'],
  ['Hyperthreading', 'Not supported'],
  ['Bus Speed', '99.7 MHz', 4],
  ['Stock Core Speed', '2500 MHz'],
  ['Stock Bus Speed', '100 MHz'],
  ['Average Temperature', '51 °C', 7],
];

const cacheProperties = [
  ['L1 Data Cache Size', '4 x 32 KBytes'],
  ['L1 Instructions Cache Size', '4 x 32 KBytes'],
  ['L2 Unified Cache Size', '4 x 256 KBytes'],
  ['L3 Unified Cache Size', '6144 KBytes'],
];

const cores = [
  { name: 'Core 0', speed: '3291.1 MHz', multiplier: 'x 33.0', temperature: '51 °C', apic: 0 },
  { name: 'Core 1', speed: '3291.1 MHz', multiplier: 'x 33.0', temperature: '50 °C', apic: 2 },
  { name: 'Core 2', speed: '3091.7 MHz', multiplier: 'x 31.0', temperature: '52 °C', apic: 4 },
  { name: 'Core 3', speed: '3191.4 MHz', multiplier: 'x 32.0', temperature: '50 °C', apic: 6 },
];

const PropertyRows = ({ rows }) =>
  rows.map(([name, value, level]) => (
    <React.Fragment key={name}>
      <dt>{name}</dt>
      <Reading $warm={value.includes('°C')}>
        <ReadingText $wide={!!level}>{value}</ReadingText>
        {level && <Meter level={level} />}
      </Reading>
    </React.Fragment>
  ));

const Speccy = () => (
  <AppWindow $background="#515151">
    <TitleBar $inactive>
      <svg width="20" height="20" viewBox="0 0 20 20">
        <rect x="6" y="0" width="9" height="11" rx="1" fill="#8d8d8d" />
        <path d="M7 2h7M7 5h7M7 8h7" stroke="#3b3b3b" />
        <path d="M1 9Q0 6 4 6H6V12H14V6H17Q20 6 19 9L20 16H0Z" fill="#2b2b2b" />
        <path d="M2 8h3v5H2zM15 8h3v5h-3z" fill="#e8e8e8" />
        <circle cx="5" cy="16" r="4" fill="#2b2b2b" />
        <circle cx="15" cy="16" r="4" fill="#2b2b2b" />
        <circle cx="5" cy="16" r="2.6" fill="#6f8db5" />
        <circle cx="15" cy="16" r="2.6" fill="#e8202c" />
      </svg>
      <WindowTitle>Speccy</WindowTitle>
      <WindowButtons />
    </TitleBar>
    <MenuBar>
      <MenuItem>File</MenuItem>
      <MenuItem>View</MenuItem>
      <MenuItem>Help</MenuItem>
    </MenuBar>
    <SpeccyBody>
      <SideMenu>
        {sideItems.map((item) => (
          <SideLink key={item.name} href="#">
            <svg width="20" height="20" viewBox="0 0 20 20" overflow="visible">
              {item.icon}
            </svg>
            {item.name}
          </SideLink>
        ))}
      </SideMenu>
      <Details>
        <SectionTitle>
          <svg width="20" height="20" viewBox="0 0 20 20">
            <CpuDrawing />
          </svg>
          CPU
        </SectionTitle>
        <GroupTitle $indent="60px">
          <Arrow />
          Intel Core i5 7300HQ
        </GroupTitle>
        <Properties $keyWidth="175px" $height="325px" $indent="81px">
          <PropertyRows rows={cpuProperties} />
        </Properties>
        <GroupTitle $indent="85px">
          <Arrow />
          Caches
        </GroupTitle>
        <Properties $keyWidth="208px" $height="65px" $indent="106px">
          <PropertyRows rows={cacheProperties} />
        </Properties>
        <GroupTitle $indent="85px">
          <Arrow />
          Cores
        </GroupTitle>
        <CoreTable>
          <thead>
            <tr>
              <CoreCell $empty $width="65px" />
              <CoreHead scope="col" $width="95px">Core<br />Speed</CoreHead>
              <CoreHead scope="col" $width="89px">Multiplier</CoreHead>
              <CoreHead scope="col" $width="102px">Bus<br />Speed</CoreHead>
              <CoreHead scope="col" $width="119px">Temperature</CoreHead>
              <CoreHead scope="col" $width="92px">Threads</CoreHead>
            </tr>
          </thead>
          <tbody>
            {cores.map((core) => (
              <tr key={core.name}>
                <CoreHead scope="row">{core.name}</CoreHead>
                <CoreCell>{core.speed}</CoreCell>
                <CoreCell>{core.multiplier}</CoreCell>
                <CoreCell>
                  <CellReading>
                    99.7 MHz
                    <Meter level={5} />
                  </CellReading>
                </CoreCell>
                <CoreCell $warm>
                  <CellReading>
                    {core.temperature}
                    <Meter level={7} />
                  </CellReading>
                </CoreCell>
                <CoreCell>APIC ID: {core.apic}</CoreCell>
              </tr>
            ))}
          </tbody>
        </CoreTable>
      </Details>
    </SpeccyBody>
  </AppWindow>
);

const App = () => (
  <>
    <GlobalStyle />
    <Desktop>
      <StabilityTest />
      <Speccy />
    </Desktop>
  </>
);

export default App;
